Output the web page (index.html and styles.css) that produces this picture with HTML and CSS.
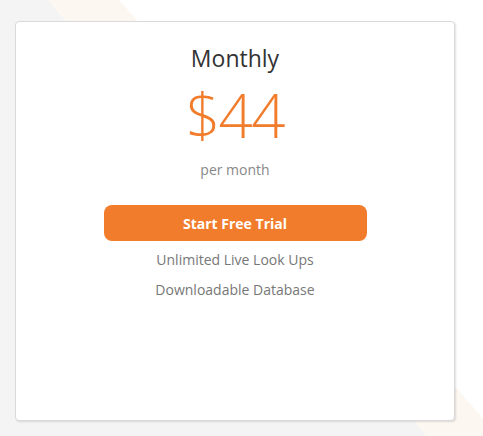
FILE: index.html
```html
<!DOCTYPE html>
<html lang="en">
<head>
<meta charset="utf-8">
<title>Pricing</title>
<link rel="stylesheet" href="styles.css">
</head>
<body>
<div class="page">
  <div class="card">
    <h2 class="title">Monthly</h2>
    <div class="price">$44</div>
    <div class="per">per month</div>
    <a class="cta" href="#">Start Free Trial</a>
    <ul class="features">
      <li>Unlimited Live Look Ups</li>
      <li>Downloadable Database</li>
    </ul>
  </div>
</div>
</body>
</html>
```
FILE: styles.css
```css
html, body {
  margin: 0;
  padding: 0;
}
body {
  font-family: "Open Sans", "Noto Sans", sans-serif;
}
.page {
  min-height: 100vh;
  box-sizing: border-box;
  padding: 21px 0 0 15px;
  background: linear-gradient(49deg, #f4f4f4 0, #f4f4f4 322px, #fdf7f2 322px, #fdf7f2 376px, #ffffff 376px);
}
.card {
  width: 440px;
  height: 400px;
  box-sizing: border-box;
  background: #fff;
  border: 1px solid #dadada;
  border-radius: 4px;
  box-shadow: 1px 1px 2px rgba(0, 0, 0, 0.12);
  display: flex;
  flex-direction: column;
  align-items: center;
  padding-top: 21px;
}
.title {
  margin: 0;
  font-size: 23px;
  line-height: 30px;
  font-weight: 400;
  color: #333;
}
.price {
  margin-top: 12px;
  font-size: 60px;
  line-height: 60px;
  font-weight: 330;
  letter-spacing: -1.5px;
  color: #f17c2c;
}
.per {
  margin-top: 15px;
  font-size: 14px;
  line-height: 20px;
  color: #888;
}
.cta {
  margin-top: 25px;
  width: 263px;
  height: 36px;
  border-radius: 8px;
  background: #f17c2c;
  color: #fff;
  font-size: 14px;
  font-weight: 700;
  text-decoration: none;
  display: flex;
  align-items: center;
  justify-content: center;
}
.features {
  list-style: none;
  margin: 4px 0 0;
  padding: 0;
  text-align: center;
  font-size: 14px;
  line-height: 30px;
  color: #777;
}
```
